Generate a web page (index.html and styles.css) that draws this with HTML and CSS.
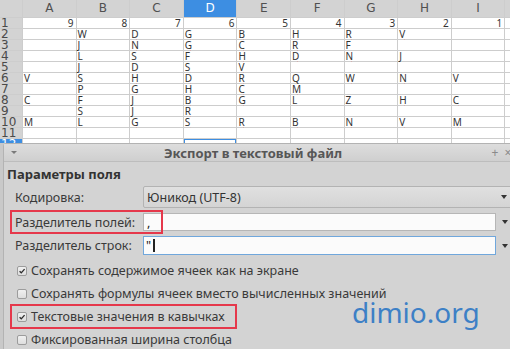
FILE: index.html
```html
<!DOCTYPE html>
<html>
<head>
<meta charset="utf-8">
<title>Экспорт в текстовый файл</title>
<link rel="stylesheet" href="styles.css">
</head>
<body>
    <div class="sheet">
        <div class="corner"></div>
        <div class="ch">A</div><div class="ch">B</div><div class="ch">C</div><div class="ch active">D</div><div class="ch">E</div><div class="ch">F</div><div class="ch">G</div><div class="ch">H</div><div class="ch">I</div><div class="ch"></div>

        <div class="rh">1</div>
        <div class="c n">9</div><div class="c n">8</div><div class="c n">7</div><div class="c n">6</div><div class="c n">5</div><div class="c n">4</div><div class="c n">3</div><div class="c n">2</div><div class="c n">1</div><div class="c"></div>

        <div class="rh">2</div>
        <div class="c"></div><div class="c">W</div><div class="c">D</div><div class="c">G</div><div class="c">B</div><div class="c">H</div><div class="c">R</div><div class="c">V</div><div class="c"></div><div class="c"></div>

        <div class="rh">3</div>
        <div class="c"></div><div class="c">J</div><div class="c">N</div><div class="c">G</div><div class="c">C</div><div class="c">R</div><div class="c">F</div><div class="c"></div><div class="c"></div><div class="c"></div>

        <div class="rh">4</div>
        <div class="c"></div><div class="c">L</div><div class="c">S</div><div class="c">F</div><div class="c">H</div><div class="c">D</div><div class="c">N</div><div class="c">J</div><div class="c"></div><div class="c"></div>

        <div class="rh">5</div>
        <div class="c"></div><div class="c">J</div><div class="c">D</div><div class="c">S</div><div class="c">V</div><div class="c"></div><div class="c"></div><div class="c"></div><div class="c"></div><div class="c"></div>

        <div class="rh">6</div>
        <div class="c">V</div><div class="c">S</div><div class="c">H</div><div class="c">D</div><div class="c">R</div><div class="c">Q</div><div class="c">W</div><div class="c">N</div><div class="c">V</div><div class="c"></div>

        <div class="rh">7</div>
        <div class="c"></div><div class="c">P</div><div class="c">G</div><div class="c">H</div><div class="c">C</div><div class="c">M</div><div class="c"></div><div class="c"></div><div class="c"></div><div class="c"></div>

        <div class="rh">8</div>
        <div class="c">C</div><div class="c">F</div><div class="c">J</div><div class="c">B</div><div class="c">G</div><div class="c">L</div><div class="c">Z</div><div class="c">H</div><div class="c">C</div><div class="c"></div>

        <div class="rh">9</div>
        <div class="c"></div><div class="c">S</div><div class="c">J</div><div class="c">R</div><div class="c"></div><div class="c"></div><div class="c"></div><div class="c"></div><div class="c"></div><div class="c"></div>

        <div class="rh">10</div>
        <div class="c">M</div><div class="c">L</div><div class="c">G</div><div class="c">S</div><div class="c">R</div><div class="c">B</div><div class="c">N</div><div class="c">V</div><div class="c">M</div><div class="c"></div>

        <div class="rh">11</div>
        <div class="c"></div><div class="c"></div><div class="c"></div><div class="c"></div><div class="c"></div><div class="c"></div><div class="c"></div><div class="c"></div><div class="c"></div><div class="c"></div>

        <div class="rh active">12</div>
        <div class="c"></div><div class="c"></div><div class="c"></div><div class="c selected"></div><div class="c"></div><div class="c"></div><div class="c"></div><div class="c"></div><div class="c"></div><div class="c"></div>
    </div>

    <div class="dialog">
        <div class="titlebar">
            <span class="menu-arrow"></span>
            <span class="title">Экспорт в текстовый файл</span>
            <span class="tb-buttons"><span>+</span><span>×</span></span>
        </div>
        <div class="panel">
            <h2>Параметры поля</h2>

            <div class="form-row row-combo">
                <label>Кодировка:</label>
                <div class="combo">
                    <span>Юникод (UTF-8)</span>
                    <span class="drop"><i class="tri"></i></span>
                </div>
            </div>

            <div class="form-row row-field">
                <label>Разделитель полей:</label>
                <div class="field">
                    <div class="box">,</div>
                    <span class="drop"><i class="tri"></i></span>
                </div>
                <span class="hl hl-field"></span>
            </div>

            <div class="form-row row-field2">
                <label>Разделитель строк:</label>
                <div class="field">
                    <div class="box focus">"<span class="caret"></span></div>
                    <span class="drop"><i class="tri"></i></span>
                </div>
            </div>

            <div class="checks">
                <div class="check">
                    <span class="cb"><svg width="10" height="10" viewBox="0 0 10 10"><path d="M2 5.2 L4.1 7.3 L8.2 2.6" fill="none" stroke="#2e2e2e" stroke-width="1.7"/></svg></span>
                    Сохранять содержимое ячеек как на экране
                </div>
                <div class="check">
                    <span class="cb"></span>
                    Сохранять формулы ячеек вместо вычисленных значений
                </div>
                <div class="check">
                    <span class="cb"><svg width="10" height="10" viewBox="0 0 10 10"><path d="M2 5.2 L4.1 7.3 L8.2 2.6" fill="none" stroke="#2e2e2e" stroke-width="1.7"/></svg></span>
                    Текстовые значения в кавычках
                    <span class="hl hl-check"></span>
                </div>
                <div class="check">
                    <span class="cb"></span>
                    Фиксированная ширина столбца
                </div>
            </div>
        </div>
    </div>

    <div class="watermark">dimio.org</div>
</body>
</html>
```

FILE: styles.css
```css
* {
    box-sizing: border-box;
}

body {
    margin: 0;
    width: 510px;
    height: 349px;
    overflow: hidden;
    position: relative;
    background-color: #c9c9c9;
    font-family: 'Noto Sans', sans-serif;
    color: #3a3a3a;
}

/* spreadsheet */

.sheet {
    display: grid;
    grid-template-columns: 22px repeat(9, 52.6px) 1fr;
    grid-template-rows: 17px;
    grid-auto-rows: 10px;
    gap: 1px;
    height: 143px;
    overflow: hidden;
    background-color: #cdcdcd;
}

.corner {
    background-color: #d3d3d3;
}

.ch {
    background-color: #d3d3d3;
    color: #505050;
    font-family: 'DejaVu Sans', sans-serif;
    font-size: 12px;
    line-height: 17px;
    text-align: center;
}

.ch.active {
    background-color: #3d8ee2;
    color: #ffffff;
}

.rh {
    background-color: #d3d3d3;
    color: #4a4a4a;
    font-family: 'DejaVu Sans', sans-serif;
    font-size: 12px;
    line-height: 10px;
    padding-left: 1px;
}

.rh.active {
    background-color: #3d8ee2;
    color: #ffffff;
}

.c {
    background-color: #ffffff;
    font-size: 10px;
    line-height: 10px;
    padding-left: 1px;
    color: #333333;
    text-decoration: underline wavy #e23b3b;
    text-decoration-thickness: 1px;
    text-underline-offset: 1px;
}

.c.n {
    text-align: right;
    padding-right: 2px;
    text-decoration: none;
}

.c.selected {
    box-shadow: inset 0 0 0 1px #3d8ee2;
}

/* dialog */

.dialog {
    margin-left: 3px;
    width: 516px;
    height: 210px;
    background-color: #d3d3d3;
    border: 1px solid #b3b3b3;
    border-radius: 3px 3px 0 0;
}

.titlebar {
    display: flex;
    align-items: center;
    height: 18px;
    padding: 0 6px 0 5px;
    background: linear-gradient(#dddddd, #cfcfcf);
    border-bottom: 1px solid #bdbdbd;
}

.menu-arrow {
    width: 10px;
    display: flex;
    justify-content: center;
}

.menu-arrow::before {
    content: '';
    border-left: 3px solid transparent;
    border-right: 3px solid transparent;
    border-top: 3px solid #7a7a7a;
}

.title {
    flex: 1;
    text-align: center;
    font-size: 13px;
    font-weight: 700;
    color: #575757;
    padding-right: 4px;
}

.tb-buttons {
    display: flex;
    gap: 5px;
    color: #8a8a8a;
    font-size: 12px;
}

.tb-buttons span {
    width: 8px;
    text-align: center;
}

.panel {
    padding-top: 3px;
}

.panel h2 {
    margin: 0 0 0 3px;
    font-size: 13px;
    font-weight: 700;
    line-height: 18px;
    color: #333333;
}

.form-row {
    display: flex;
    align-items: center;
    padding-left: 11px;
    position: relative;
    font-size: 12.5px;
}

.form-row label {
    width: 128px;
    flex-shrink: 0;
}

.row-combo {
    margin-top: 3px;
    height: 22px;
}

.row-field {
    margin-top: 5px;
    height: 18px;
}

.row-field2 {
    margin-top: 5px;
    height: 19px;
}

.combo {
    flex: 1;
    height: 100%;
    margin-right: 5px;
    display: flex;
    align-items: center;
    justify-content: space-between;
    padding-left: 3px;
    border: 1px solid #b3b3b3;
    border-radius: 2px;
    background: linear-gradient(#e0e0e0, #d4d4d4);
    color: #333333;
}

.field {
    flex: 1;
    height: 100%;
    margin-right: 5px;
    display: flex;
}

.box {
    flex: 1;
    display: flex;
    align-items: center;
    padding-left: 3px;
    background-color: #fbfbfb;
    border: 1px solid #b6b6b6;
    color: #222222;
}

.box.focus {
    border-color: #70a7dc;
    padding-left: 2px;
}

.caret {
    display: inline-block;
    width: 0;
    height: 13px;
    margin-left: 2px;
    border-left: 2px solid #222222;
}

.drop {
    width: 17px;
    height: 100%;
    display: flex;
    align-items: center;
    justify-content: center;
}

.tri {
    border-left: 3.5px solid transparent;
    border-right: 3.5px solid transparent;
    border-top: 4px solid #333333;
}

.checks {
    margin-top: 4px;
}

.check {
    display: flex;
    align-items: center;
    gap: 4px;
    height: 23px;
    padding-left: 13px;
    font-size: 12.5px;
    position: relative;
}

.cb {
    width: 10px;
    height: 10px;
    flex-shrink: 0;
    border: 1px solid #9c9c9c;
    border-radius: 2px;
    background: linear-gradient(#f0f0f0, #dedede);
    display: flex;
    align-items: center;
    justify-content: center;
}

.cb svg {
    display: block;
}

.hl {
    position: absolute;
    border: 2px solid #e5384b;
}

.hl-field {
    left: 6px;
    top: -3px;
    width: 153px;
    height: 24px;
}

.hl-check {
    left: 6px;
    top: -1px;
    width: 227px;
    height: 25px;
}

.watermark {
    position: absolute;
    left: 352px;
    top: 298px;
    font-size: 28px;
    line-height: 28px;
    color: #3d80c6;
}
```
